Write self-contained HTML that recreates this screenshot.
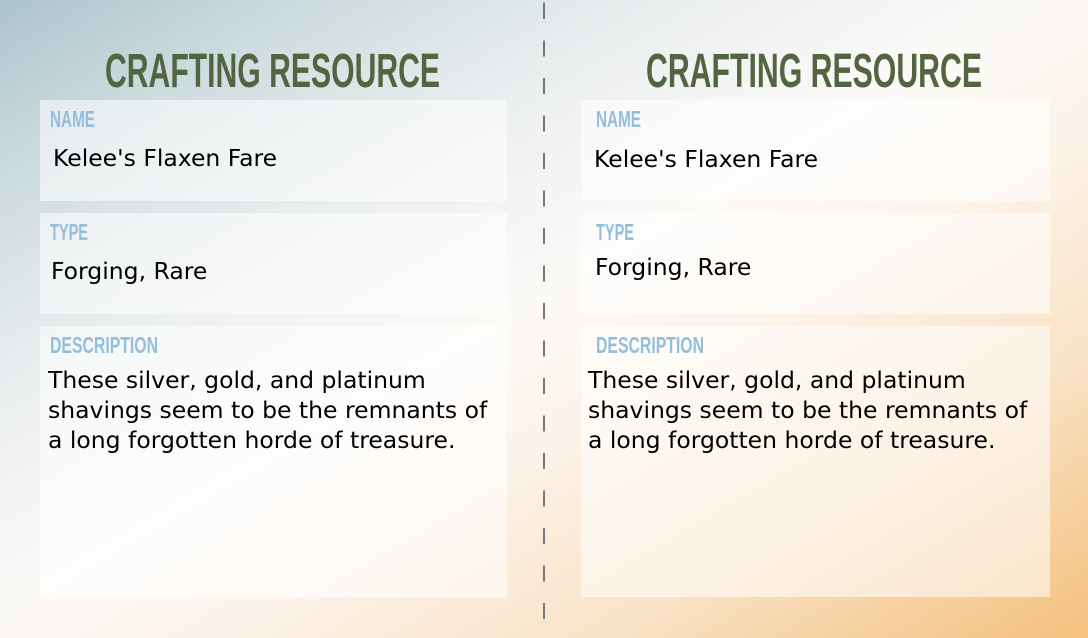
<!DOCTYPE html>
<html><head><style>
html,body{margin:0;padding:0}
body{width:1088px;height:638px;overflow:hidden;position:relative;
background:linear-gradient(to bottom right,#adc4cd 0%,#cfdcdf 15%,#eceff0 32%,#fcfaf7 48%,#fcf3ea 60%,#f9e2c5 78%,#f4c07c 100%);
font-family:"DejaVu Sans",sans-serif}
.dash{position:absolute;left:543px;top:0;width:2px;height:638px;
background:repeating-linear-gradient(to bottom,#777 0,#777 16px,transparent 16px,transparent 37.5px);background-position:0 3px}
svg{position:absolute;overflow:hidden}
.t{font-family:"Liberation Sans",sans-serif;font-weight:bold;fill:#536441}
.l{font-family:"Liberation Sans",sans-serif;font-weight:bold;fill:#93bfdc}
.box{position:absolute;background:rgba(255,255,255,.55)}
.val{position:absolute;font-size:23.5px;color:#000;line-height:30px;white-space:nowrap}
</style></head><body>
<div class="dash"></div>
<svg width="1088" height="638" style="left:0;top:0">
<text class="t" x="105" y="87" font-size="48" textLength="335" lengthAdjust="spacingAndGlyphs">CRAFTING RESOURCE</text>
<text class="t" x="646" y="87" font-size="48" textLength="336" lengthAdjust="spacingAndGlyphs">CRAFTING RESOURCE</text>
</svg>
<div class="box" style="left:40px;top:100px;width:467px;height:101px"></div>
<div class="box" style="left:40px;top:213px;width:467px;height:101px"></div>
<div class="box" style="left:40px;top:326px;width:467px;height:271px"></div>
<div class="box" style="left:581px;top:100px;width:469px;height:101px"></div>
<div class="box" style="left:581px;top:213px;width:469px;height:101px"></div>
<div class="box" style="left:581px;top:326px;width:469px;height:271px"></div>
<svg width="1088" height="638" style="left:0;top:0">
<text class="l" x="50" y="127" font-size="23" textLength="45" lengthAdjust="spacingAndGlyphs">NAME</text>
<text class="l" x="50" y="240" font-size="23" textLength="38" lengthAdjust="spacingAndGlyphs">TYPE</text>
<text class="l" x="50" y="353" font-size="23" textLength="108" lengthAdjust="spacingAndGlyphs">DESCRIPTION</text>
<text class="l" x="596" y="127" font-size="23" textLength="45" lengthAdjust="spacingAndGlyphs">NAME</text>
<text class="l" x="596" y="240" font-size="23" textLength="38" lengthAdjust="spacingAndGlyphs">TYPE</text>
<text class="l" x="596" y="353" font-size="23" textLength="108" lengthAdjust="spacingAndGlyphs">DESCRIPTION</text>
</svg>
<div class="val" style="left:53px;top:143px">Kelee's Flaxen Fare</div>
<div class="val" style="left:51px;top:256px">Forging, Rare</div>
<div class="val" style="left:48px;top:365px">These silver, gold, and platinum<br>shavings seem to be the remnants of<br>a long forgotten horde of treasure.</div>
<div class="val" style="left:594px;top:144px">Kelee's Flaxen Fare</div>
<div class="val" style="left:595px;top:252px">Forging, Rare</div>
<div class="val" style="left:588px;top:365px">These silver, gold, and platinum<br>shavings seem to be the remnants of<br>a long forgotten horde of treasure.</div>
</body></html>
